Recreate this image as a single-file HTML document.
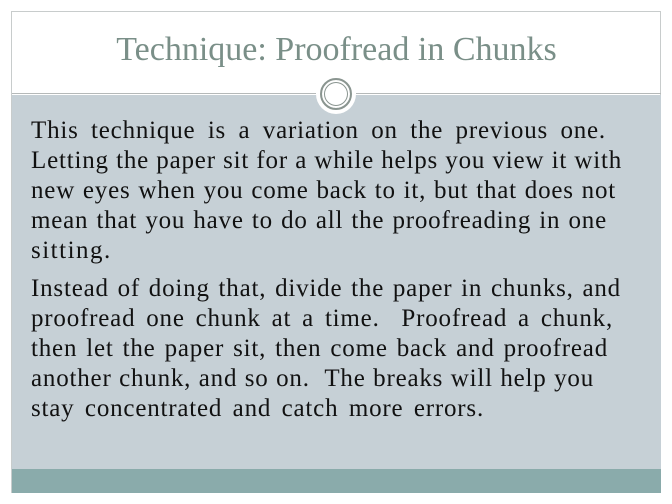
<!DOCTYPE html>
<html><head><meta charset="utf-8"><style>
html,body{margin:0;padding:0;width:672px;height:504px;background:#fff;overflow:hidden}
.frame{position:absolute;left:11px;top:11px;width:650px;height:482px;border:1px solid #c8cccc;box-sizing:border-box;background:#fff}
.body{position:absolute;left:12px;top:95px;width:649px;height:375px;background:#c6d0d6}
.foot{position:absolute;left:12px;top:469px;width:649px;height:24px;background:#8aabab}
.rule{position:absolute;top:93px;height:0;border-top:1px solid #b5b9b9}
.title{position:absolute;left:12px;width:649px;top:31px;text-align:center;font:34px "Liberation Serif",serif;color:#7a8f88}
.circ{position:absolute;left:316px;top:74px;width:40px;height:40px;border-radius:50%;background:#fff}
.circ2{position:absolute;left:320px;top:78px;width:28px;height:28px;border-radius:50%;border:2px solid #8a9590;box-shadow:inset 0 0 0 2px #fff,inset 0 0 0 3px #8a9590}
.t{position:absolute;left:31px;font:25px "Liberation Serif",serif;color:#111;white-space:nowrap;letter-spacing:0.8px;line-height:30px;text-align:justify;text-align-last:justify}
</style></head><body>
<div class="frame"></div>
<div class="title">Technique: Proofread in Chunks</div>
<div class="body"></div>
<div class="foot"></div>
<div class="rule" style="left:12px;width:304px"></div>
<div class="rule" style="left:356px;width:305px"></div>
<div class="circ"></div><div class="circ2"></div>
<div class="t" style="top:116px;width:575px">This technique is a variation on the previous one.</div>
<div class="t" style="top:146px;width:591px">Letting the paper sit for a while helps you view it with</div>
<div class="t" style="top:176px;width:585px">new eyes when you come back to it, but that does not</div>
<div class="t" style="top:206px;width:576px">mean that you have to do all the proofreading in one</div>
<div class="t" style="top:236px;text-align:left;text-align-last:left;letter-spacing:1.5px">sitting.</div>
<div class="t" style="top:274px;width:590px">Instead of doing that, divide the paper in chunks, and</div>
<div class="t" style="top:304px;width:582px">proofread one chunk at a time.&nbsp; Proofread a chunk,</div>
<div class="t" style="top:334px;width:577px">then let the paper sit, then come back and proofread</div>
<div class="t" style="top:364px;width:563px">another chunk, and so on.&nbsp; The breaks will help you</div>
<div class="t" style="top:394px;width:453px">stay concentrated and catch more errors.</div>
</body></html>
